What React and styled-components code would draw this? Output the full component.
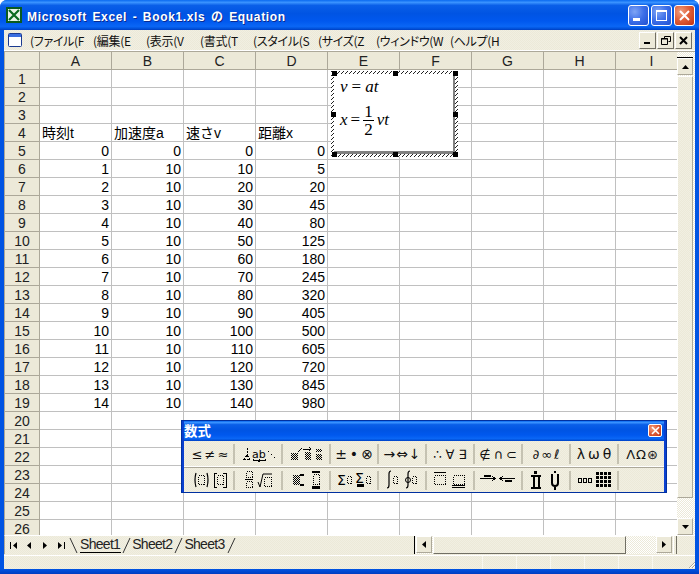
import React from 'react'
import styled, { createGlobalStyle } from 'styled-components'

const GlobalStyle = createGlobalStyle`
  html, body { margin: 0; padding: 0; background: #fff; }
  body { width: 699px; height: 574px; overflow: hidden; font-family: "Liberation Sans", sans-serif; }
`

const dither = `
  background-color: #ece9d8;
  background-image: repeating-conic-gradient(#f1efe2 0 25%, #ece9d8 0 50%);
  background-size: 2px 2px;
`

const captionBlue = 'linear-gradient(180deg,#0a6af0 0,#3a93ff 8%,#0a5fe8 18%,#0054e3 45%,#0058ee 70%,#0a66f5 88%,#0050d8 96%,#003dc0 100%)'

const Window = styled.div`
  width: 699px;
  height: 574px;
  display: flex;
  flex-direction: column;
  box-sizing: border-box;
  border-radius: 7px 7px 0 0;
  overflow: hidden;
  background: #0054e3;
`

const TitleBar = styled.div`
  height: 30px;
  flex: none;
  display: flex;
  align-items: center;
  padding: 0 7px 0 6px;
  gap: 5px;
  background: ${captionBlue};
`

const TitleText = styled.div`
  flex: 1;
  padding-top: 1px;
  color: #fff;
  font: bold 12px "Liberation Sans", "Noto Sans CJK JP", sans-serif;
  letter-spacing: 0.65px;
  word-spacing: 1.6px;
  text-shadow: 1px 1px 0 #0a2a90;
  white-space: nowrap;
`

const CapButtons = styled.div`
  display: flex;
  gap: 2px;
  margin-right: -3px;
`

const CapButton = styled.div`
  width: 21px;
  height: 21px;
  box-sizing: border-box;
  border: 1px solid #fff;
  border-radius: 3px;
  background: ${({ $close }) => ($close
    ? 'radial-gradient(circle at 30% 30%, #f0a080 0, #e0603a 45%, #c03010 100%)'
    : 'radial-gradient(circle at 30% 30%, #7ea4f5 0, #3c6ee8 50%, #2050d0 100%)')};
  display: flex;
  align-items: center;
  justify-content: center;
`

const Body = styled.div`
  flex: 1;
  min-height: 0;
  margin: 0 4px;
  display: flex;
  flex-direction: column;
  ${dither}
`

const MenuBar = styled.div`
  height: 20px;
  flex: none;
  display: flex;
  align-items: center;
  padding-left: 4px;
  border-bottom: 1px solid #fff;
`

const MenuItems = styled.div`
  flex: 1;
  display: flex;
  margin-left: 7px;
`

const MenuItem = styled.div`
  width: ${({ $w }) => $w}px;
  flex: none;
  font: 12px "Noto Sans CJK JP", sans-serif;
  font-feature-settings: "palt";
  letter-spacing: -0.3px;
  color: #111;
  white-space: nowrap;
`

const MdiButtons = styled.div`
  display: flex;
  gap: 1px;
  padding-right: 3px;
`

const MdiButton = styled.div`
  width: 15px;
  height: 15px;
  background: #ece9d8;
  border: 1px solid;
  border-color: #fff #716f64 #716f64 #fff;
  display: flex;
  align-items: center;
  justify-content: center;
`

const SheetRow = styled.div`
  height: 483px;
  flex: none;
  display: flex;
  border-top: 1px solid #aca899;
  border-left: 1px solid #aca899;
`

const SheetArea = styled.div`
  position: relative;
  width: 672px;
  flex: none;
  overflow: hidden;
  background: #fff;
`

const Row = styled.div`
  display: flex;
  height: 18px;
`

const Corner = styled.div`
  width: 35px;
  flex: none;
  box-sizing: border-box;
  background: #ece9d8;
  border-right: 1px solid #aca899;
  border-bottom: 1px solid #aca899;
`

const ColHead = styled.div`
  width: 72px;
  flex: none;
  box-sizing: border-box;
  background: #ece9d8;
  border-right: 1px solid #aca899;
  border-bottom: 1px solid #aca899;
  text-align: center;
  font-size: 14px;
  line-height: 19px;
  color: #222;
`

const RowHead = styled(Corner)`
  text-align: center;
  font-size: 14px;
  line-height: 19px;
  color: #222;
`

const Cell = styled.div`
  width: 72px;
  flex: none;
  box-sizing: border-box;
  border-right: 1px solid #c0c0c0;
  border-bottom: 1px solid #c0c0c0;
  padding: 0 2px;
  font: 14px/19px "Liberation Sans", "Noto Sans CJK JP", sans-serif;
  color: #000;
  text-align: ${({ $num }) => ($num ? 'right' : 'left')};
  white-space: nowrap;
`

const EqFrame = styled.div`
  position: absolute;
  left: 326px;
  top: 19px;
  width: 127px;
  height: 86px;
  box-sizing: border-box;
  padding: 3px;
  background: repeating-linear-gradient(135deg, #222 0 1px, #fff 1px 2.83px);
`

const EqPaper = styled.div`
  width: 100%;
  height: 100%;
  box-sizing: border-box;
  background: #fff;
  border-right: 2px solid #808080;
  border-bottom: 3px solid #808080;
  padding-left: 6px;
  font: 17px "Liberation Serif", serif;
  color: #000;
`

const Handle = styled.div`
  position: absolute;
  width: 5px;
  height: 5px;
  background: #000;
  left: ${({ $x }) => $x}px;
  top: ${({ $y }) => $y}px;
`

const EqLine = styled.div`
  display: flex;
  align-items: center;
  gap: ${({ $gap }) => $gap}px;
  height: ${({ $h }) => $h}px;
  i { font-style: italic; }
`

const Frac = styled.div`
  display: flex;
  flex-direction: column;
  align-items: center;
  line-height: 17px;
  span:first-child { border-bottom: 1px solid #000; padding: 0 1px; }
`

const VScroll = styled.div`
  width: 18px;
  flex: none;
  display: flex;
  flex-direction: column;
  padding: 5px 2px 0 0;
  box-sizing: border-box;
  background: repeating-conic-gradient(#fff 0 25%, #ece9d8 0 50%) 0 0 / 2px 2px;
`

const VCap = styled.div`
  flex: none;
  height: 1px;
  background: #000;
`

const ScrollButton = styled.div`
  flex: none;
  width: 16px;
  height: 17px;
  background: #ece9d8;
  box-sizing: border-box;
  border: 1px solid;
  border-color: #fff #aca899 #aca899 #fff;
  display: flex;
  align-items: center;
  justify-content: center;
`

const VThumb = styled.div`
  height: 422px;
  flex: none;
  margin-top: 1px;
  box-sizing: border-box;
  ${dither}
  border: 1px solid;
  border-color: #fff #aca899 #aca899 #fff;
`

const Gap = styled.div`
  flex: 1;
`

const TabRow = styled.div`
  height: 18px;
  flex: none;
  display: flex;
  align-items: stretch;
  border-left: 1px solid #aca899;
  border-top: 1px solid #fff;
`

const TabNav = styled.div`
  width: 64px;
  flex: none;
  display: flex;
  align-items: center;
`

const NavCell = styled.div`
  width: 16px;
  display: flex;
  align-items: center;
  justify-content: center;
`

const Tabs = styled.div`
  width: 345px;
  flex: none;
  display: flex;
  align-items: center;
`

const Tab = styled.span`
  font-size: 14px;
  letter-spacing: -0.7px;
  line-height: 15px;
  color: #222;
  margin: 0 1px;
  padding-right: 1px;
  border-bottom: 1px solid ${({ $active }) => ($active ? '#000' : 'transparent')};
`

const Split = styled.div`
  width: 2px;
  flex: none;
  box-sizing: border-box;
  border-left: 1px solid #000;
  background: #f6f5ee;
`

const HScroll = styled.div`
  width: 256px;
  flex: none;
  display: flex;
  background: repeating-conic-gradient(#fff 0 25%, #ece9d8 0 50%) 0 0 / 2px 2px;
`

const HThumb = styled.div`
  width: 193px;
  flex: none;
  margin-left: 1px;
  box-sizing: border-box;
  ${dither}
  border: 1px solid;
  border-color: #fff #716f64 #716f64 #fff;
`

const EndSplit = styled.div`
  width: 4px;
  flex: none;
  margin-left: 1px;
  box-sizing: border-box;
  border-left: 1px solid #fff;
  border-right: 1px solid #716f64;
`

const StatusBar = styled.div`
  flex: 1;
  display: flex;
  margin-top: 1px;
  border-top: 1px solid #fff;
`

const StatusMain = styled.div`
  width: 478px;
  flex: none;
`

const StatusCell = styled.div`
  width: ${({ $w }) => $w}px;
  flex: none;
  border-left: 1px solid #f8f7f0;
`

const Grip = styled.svg`
  margin-left: auto;
  align-self: flex-end;
`

const BottomEdge = styled.div`
  height: 5px;
  flex: none;
  background: linear-gradient(180deg, #0054e3, #003cc0);
`

const Palette = styled.div`
  position: absolute;
  left: 181px;
  top: 420px;
  width: 486px;
  height: 73px;
  box-sizing: border-box;
  border: 3px solid #0a40d0;
  border-top: 1px solid #3a80f0;
  outline: 1px solid #0030a0;
  outline-offset: -1px;
  display: flex;
  flex-direction: column;
  background: #ece9d8;
`

const PaletteTitle = styled.div`
  height: 20px;
  flex: none;
  display: flex;
  align-items: center;
  justify-content: space-between;
  padding: 0 2px 2px 0;
  box-sizing: border-box;
  color: #fff;
  font: bold 13.5px "Noto Sans CJK JP", sans-serif;
  background: ${captionBlue};
`

const PaletteClose = styled(CapButton)`
  width: 14px;
  height: 13px;
  border-radius: 2px;
`

const SymbolRow = styled.div`
  flex: ${({ $h }) => `0 0 ${$h}px`};
  display: flex;
  padding-left: 3px;
  ${dither}
  border-bottom: ${({ $top }) => ($top ? '1px solid #aca899' : 'none')};
  box-shadow: ${({ $top }) => ($top ? 'inset 0 -1px 0 #fff' : 'none')};
`

const Group = styled.div`
  width: 48px;
  flex: none;
  box-sizing: border-box;
  border-right: 2px solid ${({ $last }) => ($last ? 'transparent' : '#c5c2b2')};
  margin: 3px 0;
  display: flex;
  align-items: center;
  justify-content: center;
  gap: ${({ $gap }) => $gap ?? 3}px;
  font: ${({ $size }) => $size ?? 13}px "DejaVu Sans", sans-serif;
  color: #111;
  white-space: nowrap;
`

const Glyphs = ({ text, gap, size, last }) => (
  <Group $gap={gap} $size={size} $last={last}>
    {[...text].map((c) => <span key={c}>{c}</span>)}
  </Group>
)

const Box = ({ x, y, w = 5, h = 7 }) => (
  <rect x={x + 0.5} y={y + 0.5} width={w} height={h} fill="none" stroke="#000" strokeDasharray="1 1" />
)

const Checker = ({ x, y, w, h }) => {
  let d = ''
  for (let j = 0; j < h; j++) {
    for (let i = 0; i < w; i++) {
      if ((i + j) % 2 === 0) d += `M${x + i} ${y + j}h1v1h-1z`
    }
  }
  return <path d={d} fill="#000" stroke="none" />
}

const Bar = ({ x, y, w, h = 2 }) => <rect x={x} y={y} width={w} height={h} fill="#000" stroke="none" />

const Draw = ({ children, w = 44, h = 19 }) => (
  <svg width={w} height={h} viewBox={`0 0 ${w} ${h}`} shapeRendering="crispEdges" fill="none" stroke="#000" style={{ overflow: 'visible' }}>
    {children}
  </svg>
)

const IconText = styled.text`
  font: ${({ $size }) => $size}px "DejaVu Sans", sans-serif;
  fill: #000;
  stroke: none;
`

const columns = ['A', 'B', 'C', 'D', 'E', 'F', 'G', 'H', 'I']
const labels = ['時刻t', '加速度a', '速さv', '距離x']
const distances = [0, 5, 20, 45, 80, 125, 180, 245, 320, 405, 500, 605, 720, 845, 980]

const rowCells = (n) => {
  if (n === 4) return labels.map((t) => ({ t }))
  if (n < 5 || n > 19) return []
  const i = n - 5
  return [i, i === 0 ? 0 : 10, i * 10, distances[i]].map((t) => ({ t, num: true }))
}

const rows = Array.from({ length: 26 }, (_, i) => i + 1)
const matrixCells = [0, 1, 2, 3].flatMap((r) => [0, 1, 2, 3].map((c) => [24 + c * 4, 1 + r * 4]))

const menus = [
  ['(ファイル(F', 63], ['(編集(E', 53], ['(表示(V', 54], ['(書式(T', 53],
  ['(スタイル(S', 65], ['(サイズ(Z', 58], ['(ウィンドウ(W', 74], ['(ヘルプ(H', 60]
]

const Tri = ({ dir }) => {
  const pts = {
    up: '0,4 7,4 3.5,0', down: '0,0 7,0 3.5,4', left: '4,0 4,7 0,3.5', right: '0,0 0,7 4,3.5'
  }[dir]
  const wide = dir === 'up' || dir === 'down'
  return (
    <svg width={wide ? 7 : 4} height={wide ? 4 : 7}><polygon points={pts} fill="#000" /></svg>
  )
}

const EndArrow = ({ dir }) => (
  <svg width="7" height="7">
    {dir === 'left'
      ? <path d="M0 0h1v7h-1z M7 0v7L3 3.5z" fill="#000" />
      : <path d="M6 0h1v7h-1z M0 0v7L4 3.5z" fill="#000" />}
  </svg>
)

const Slant = ({ back }) => (
  <svg width={back ? 10 : 9} height="17" style={{ flex: 'none' }}>
    <line x1={back ? 1 : 8} y1="1" x2={back ? 8 : 1} y2="16" stroke="#333" />
  </svg>
)

const ExcelIcon = () => (
  <svg width="16" height="16" viewBox="0 0 16 16">
    <rect x="0" y="0" width="16" height="16" fill="#0a5a20" />
    <rect x="2" y="2" width="12" height="12" fill="#e8f4e8" />
    <path d="M3 3 L13 13 M13 3 L3 13" stroke="#0a6a20" strokeWidth="2.2" />
  </svg>
)

const DocIcon = () => (
  <svg width="15" height="15" viewBox="0 0 15 15">
    <rect x="0.5" y="0.5" width="13" height="13" rx="1" fill="#fff" stroke="#1a3a90" />
    <rect x="1" y="1" width="12" height="3" fill="#3a6ee0" />
  </svg>
)

const App = () => (
  <>
    <GlobalStyle />
    <Window>
      <TitleBar>
        <ExcelIcon />
        <TitleText>Microsoft Excel - Book1.xls の Equation</TitleText>
        <CapButtons>
          <CapButton>
            <svg width="13" height="13"><rect x="1" y="9" width="7" height="3" fill="#fff" /></svg>
          </CapButton>
          <CapButton>
            <svg width="13" height="13"><rect x="1.5" y="1.5" width="10" height="10" fill="none" stroke="#fff" /><rect x="1" y="1" width="11" height="2" fill="#fff" /></svg>
          </CapButton>
          <CapButton $close>
            <svg width="13" height="13"><path d="M2 2 L11 11 M11 2 L2 11" stroke="#fff" strokeWidth="2" /></svg>
          </CapButton>
        </CapButtons>
      </TitleBar>
      <Body>
        <MenuBar>
          <DocIcon />
          <MenuItems>
            {menus.map(([m, w]) => <MenuItem key={m} $w={w}>{m}</MenuItem>)}
          </MenuItems>
          <MdiButtons>
            <MdiButton><svg width="9" height="9"><rect x="1" y="6" width="6" height="2" fill="#000" /></svg></MdiButton>
            <MdiButton><svg width="10" height="9"><path d="M3.5 2.5 V0.5 H9.5 V5.5 H7.5 M0.5 2.5 H6.5 V8.5 H0.5 Z M0 3 H7" fill="none" stroke="#000" /></svg></MdiButton>
            <MdiButton><svg width="9" height="9"><path d="M1 1 L8 8 M8 1 L1 8" stroke="#000" strokeWidth="2" /></svg></MdiButton>
          </MdiButtons>
        </MenuBar>
        <SheetRow>
          <SheetArea>
            <Row>
              <Corner />
              {columns.map((c) => <ColHead key={c}>{c}</ColHead>)}
            </Row>
            {rows.map((n) => {
              const cells = rowCells(n)
              return (
                <Row key={n}>
                  <RowHead>{n}</RowHead>
                  {columns.map((c, i) => (
                    <Cell key={c} $num={cells[i]?.num}>{cells[i]?.t}</Cell>
                  ))}
                </Row>
              )
            })}
            <EqFrame>
              <EqPaper>
                <EqLine $h={26} $gap={4}><i>v</i> = <i>at</i></EqLine>
                <EqLine $h={40} $gap={3}>
                  <i>x</i> =
                  <Frac><span>1</span><span>2</span></Frac>
                  <i>vt</i>
                </EqLine>
              </EqPaper>
              <Handle $x={1} $y={0} />
              <Handle $x={62} $y={0} />
              <Handle $x={122} $y={0} />
              <Handle $x={122} $y={41} />
              <Handle $x={122} $y={81} />
              <Handle $x={62} $y={81} />
              <Handle $x={1} $y={81} />
              <Handle $x={0} $y={41} />
            </EqFrame>
          </SheetArea>
          <VScroll>
            <VCap />
            <ScrollButton><Tri dir="up" /></ScrollButton>
            <VThumb />
            <Gap />
            <ScrollButton><Tri dir="down" /></ScrollButton>
          </VScroll>
        </SheetRow>
        <TabRow>
          <TabNav>
            <NavCell><EndArrow dir="left" /></NavCell>
            <NavCell><Tri dir="left" /></NavCell>
            <NavCell><Tri dir="right" /></NavCell>
            <NavCell><EndArrow dir="right" /></NavCell>
          </TabNav>
          <Tabs>
            <Slant back />
            <Tab $active>Sheet1</Tab>
            <Slant />
            <Tab>Sheet2</Tab>
            <Slant />
            <Tab>Sheet3</Tab>
            <Slant />
          </Tabs>
          <Split />
          <HScroll>
            <ScrollButton><Tri dir="left" /></ScrollButton>
            <HThumb />
            <Gap />
            <ScrollButton><Tri dir="right" /></ScrollButton>
          </HScroll>
          <EndSplit />
        </TabRow>
        <StatusBar>
          <StatusMain />
          <StatusCell $w={33} />
          <StatusCell $w={33} />
          <StatusCell $w={33} />
          <StatusCell $w={33} />
          <StatusCell $w={33} />
          <StatusCell $w={33} />
          <Grip width="12" height="12">
            <path d="M11 3 L3 11 M11 6 L6 11 M11 9 L9 11" stroke="#aca899" />
            <path d="M11 4 L4 11 M11 7 L7 11 M11 10 L10 11" stroke="#fff" />
          </Grip>
        </StatusBar>
      </Body>
      <BottomEdge />
      <Palette>
        <PaletteTitle>
          数式
          <PaletteClose $close>
            <svg width="9" height="9"><path d="M1 1 L8 8 M8 1 L1 8" stroke="#fff" strokeWidth="1.6" /></svg>
          </PaletteClose>
        </PaletteTitle>
        <SymbolRow $h={26} $top>
          <Glyphs text="≤≠≈" gap={2} />
          <Group>
            <Draw>
              <path d="M11 3 V10 M8 14.5 H14 L11 10 Z" strokeDasharray="2 1" />
              <IconText x="16" y="13" $size={11}>ab</IconText>
              <path d="M17 14 V15 H23 V14 M23 15 H29 V14 M22 16 H24" />
              <path d="M32 6 h1 M35 9 h1 M38 12 h1" />
            </Draw>
          </Group>
          <Group>
            <Draw>
              <Checker x={7} y={8} w={7} h={7} /><path d="M14 7 L18 3" />
              <Checker x={21} y={7} w={6} h={8} /><path d="M19 4 H27 M25 2 L27 4 L25 6" />
              <Checker x={32} y={4} w={6} h={3} /><Checker x={32} y={9} w={6} h={6} />
            </Draw>
          </Group>
          <Glyphs text="±•⊗" gap={3} size={14} />
          <Glyphs text="→⇔↓" gap={1} size={14} />
          <Glyphs text="∴∀∃" gap={4} />
          <Glyphs text="∉∩⊂" gap={3} />
          <Glyphs text="∂∞ℓ" gap={2} />
          <Glyphs text="λωθ" gap={3} size={14} />
          <Glyphs text="ΛΩ⊛" gap={1} last />
        </SymbolRow>
        <SymbolRow $h={23}>
          <Group>
            <Draw>
              <path d="M8 2 Q6 9 8 16 M19 2 Q21 9 19 16" strokeWidth="1.2" shapeRendering="auto" />
              <Box x={10} y={4} w={6} h={9} />
              <path d="M29 2 H26 V16 H29 M35 2 H38 V16 H35" />
              <Box x={29} y={4} w={6} h={9} />
            </Draw>
          </Group>
          <Group>
            <Draw>
              <Box x={10} y={0} w={6} h={6} /><path d="M9 8.5 H17" /><Box x={10} y={10} w={6} h={6} />
              <path d="M22 11 L24 16 L27 3 H36" shapeRendering="auto" /><Box x={28} y={6} w={7} h={9} />
            </Draw>
          </Group>
          <Group>
            <Draw>
              <Checker x={9} y={4} w={7} h={10} /><Bar x={16} y={3} w={4} /><Bar x={16} y={13} w={4} />
              <Bar x={28} y={0} w={8} /><Bar x={28} y={15} w={8} h={3} /><Box x={29} y={3} w={6} h={10} />
            </Draw>
          </Group>
          <Group>
            <Draw>
              <IconText x="5" y="14" $size={14}>Σ</IconText><Box x={15} y={5} w={4} h={7} />
              <IconText x="23" y="12" $size={14}>Σ</IconText><Bar x={25} y={13} w={7} h={3} /><Box x={34} y={5} w={4} h={7} />
            </Draw>
          </Group>
          <Group>
            <Draw>
              <path d="M11 0 Q9 0 9 3 V14 Q9 17 7 17" shapeRendering="auto" strokeWidth="1.2" /><Box x={13} y={5} w={4} h={7} />
              <path d="M30 0 Q28 0 28 3 V14 Q28 17 26 17" shapeRendering="auto" strokeWidth="1.2" />
              <circle cx="28" cy="9" r="2.5" shapeRendering="auto" /><Box x={32} y={5} w={4} h={7} />
            </Draw>
          </Group>
          <Group>
            <Draw>
              <path d="M6 1.5 H18" /><Box x={6} y={4} w={11} h={9} />
              <Box x={25} y={4} w={11} h={9} /><path d="M24 14.5 H37 M24 16.5 H37" />
            </Draw>
          </Group>
          <Group>
            <Draw>
              <Bar x={8} y={4} w={7} /><path d="M4 7.5 H19 M16 5 L19 7.5 L16 10" />
              <path d="M24 7.5 H39 M27 5 L24 7.5 L27 10" /><Bar x={29} y={9} w={7} />
            </Draw>
          </Group>
          <Group>
            <Draw>
              <Bar x={10} y={0} w={3} h={3} /><Bar x={7} y={4} w={10} />
              <Bar x={9} y={6} w={2} h={10} /><Bar x={14} y={6} w={2} h={10} /><Bar x={7} y={16} w={10} />
              <Bar x={30} y={0} w={2} h={2} />
              <path d="M28 3 V12 Q28 15 31 15 Q34 15 34 12 V3" strokeWidth="2" shapeRendering="auto" />
              <Bar x={30} y={16} w={2} h={3} />
            </Draw>
          </Group>
          <Group>
            <Draw>
              <rect x={6.5} y={7.5} width={3} height={4} /><rect x={11.5} y={7.5} width={3} height={4} /><rect x={16.5} y={7.5} width={3} height={4} />
              {matrixCells.map(([x, y]) => <Bar key={`${x}-${y}`} x={x} y={y} w={3} h={3} />)}
            </Draw>
          </Group>
        </SymbolRow>
      </Palette>
    </Window>
  </>
)

export default App
